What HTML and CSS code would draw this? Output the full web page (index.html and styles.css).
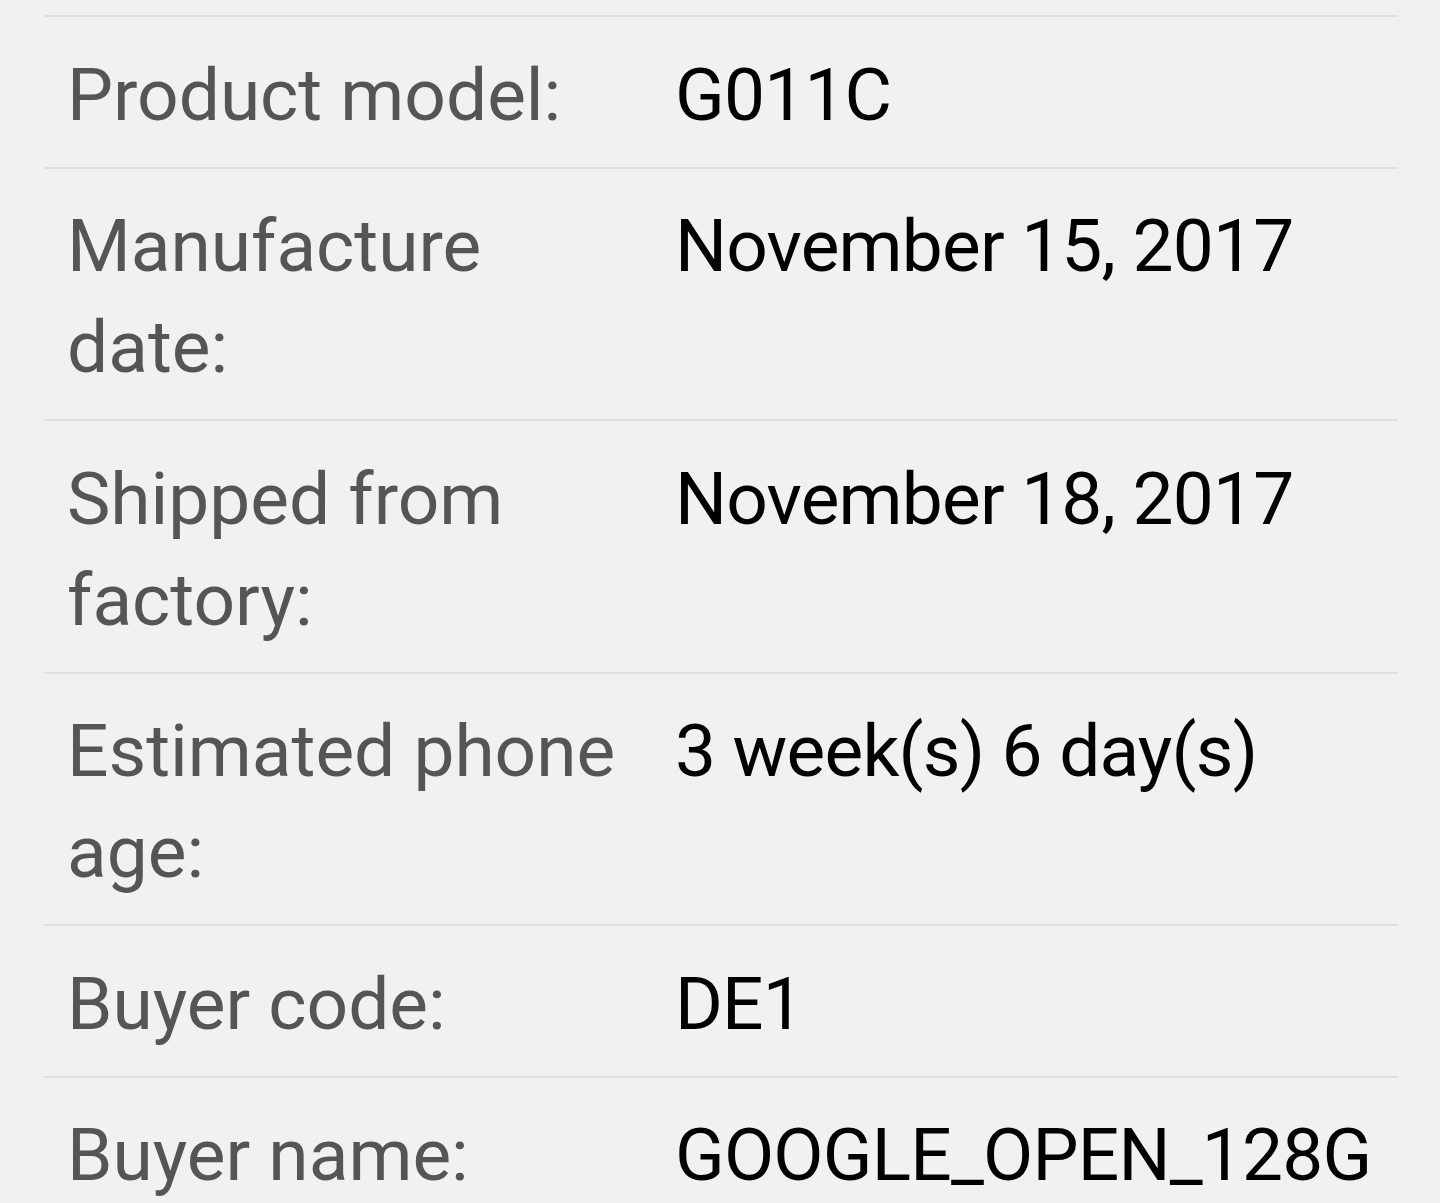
FILE: index.html
```html
<!DOCTYPE html>
<html lang="en">
<head>
<meta charset="utf-8">
<title>Phone info</title>
<link rel="stylesheet" href="styles.css">
</head>
<body>
<div class="list">
  <div class="row"><div class="label">Product model:</div><div class="value">G011C</div></div>
  <div class="row"><div class="label">Manufacture date:</div><div class="value">November 15, 2017</div></div>
  <div class="row"><div class="label">Shipped from factory:</div><div class="value">November 18, 2017</div></div>
  <div class="row"><div class="label">Estimated phone age:</div><div class="value">3 week(s) 6 day(s)</div></div>
  <div class="row"><div class="label">Buyer code:</div><div class="value">DE1</div></div>
  <div class="row"><div class="label">Buyer name:</div><div class="value">GOOGLE_OPEN_128G</div></div>
</div>
</body>
</html>
```

FILE: styles.css
```css
html, body {
  margin: 0;
  padding: 0;
  background: #f1f1f1;
  overflow: hidden;
  height: 1203px;
}
.list {
  padding: 15px 42px 0 44px;
  font-family: Roboto, "Noto Sans", sans-serif;
  font-size: 73px;
  line-height: 101px;
}
.row {
  display: grid;
  grid-template-columns: 608px 1fr;
  border-top: 2px solid #e0e0e0;
  padding: 27.5px 0 21px 23px;
}
.label {
  color: #555555;
  padding-right: 40px;
}
.value {
  color: #000000;
  white-space: nowrap;
  letter-spacing: -0.8px;
}
```
